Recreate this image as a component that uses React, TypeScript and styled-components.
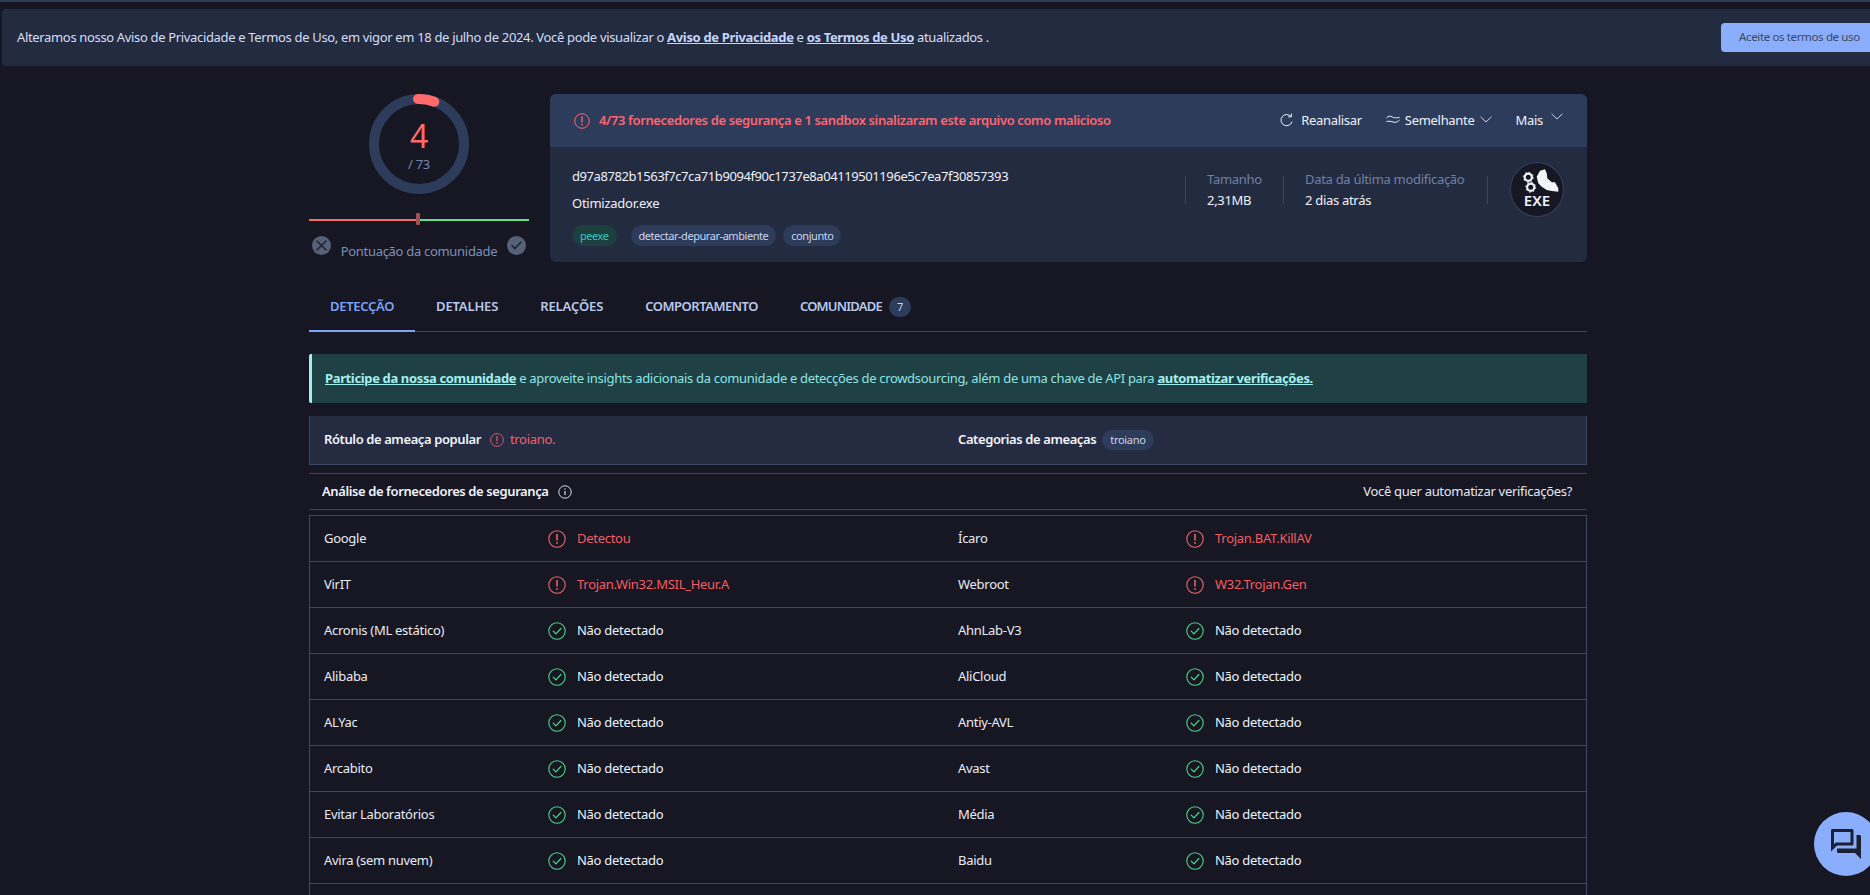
import React from "react";
import styled, { createGlobalStyle } from "styled-components";

const Global = createGlobalStyle`
  html, body { margin: 0; padding: 0; background: #161723; height: 100%; overflow: hidden; }
  body { font-family: "Noto Sans", "Liberation Sans", sans-serif; color: #eef1f8; letter-spacing: -0.3px; }
  * { box-sizing: border-box; }
`;

const Page = styled.div`
  position: relative;
  height: 895px;
  overflow: hidden;
  background: #161723;
`;
const TopStrip = styled.div`
  height: 2px;
  background: #2d3b59;
`;
const NoticeBar = styled.div`
  margin: 7px 0 0 2px;
  height: 57px;
  padding: 0 0 0 15px;
  display: flex;
  align-items: center;
  justify-content: space-between;
  background: #232b41;
  border-radius: 4px 0 0 4px;
  font-size: 13px;
  letter-spacing: -0.34px;
  color: #d5def5;
`;
const NoticeText = styled.span`
  padding-bottom: 2px;
`;
const NoticeLink = styled.a`
  font-weight: 700;
  color: #c5d6fb;
  text-decoration: underline;
`;
const AcceptButton = styled.button`
  width: 149px;
  height: 29px;
  border: 0;
  border-radius: 4px 0 0 4px;
  background: #8aaefc;
  color: #3a4763;
  font: 11.5px "Noto Sans", sans-serif;
  letter-spacing: -0.36px;
  text-align: left;
  padding: 0 0 2px 18px;
`;
const Main = styled.main`
  width: 1278px;
  margin-left: 309px;
`;
const Summary = styled.section`
  margin-top: 28px;
  display: grid;
  grid-template-columns: 220px 1037px;
  gap: 21px;
  height: 168px;
`;
const ScoreColumn = styled.div`
  display: flex;
  flex-direction: column;
  align-items: center;
`;
const Donut = styled.div`
  position: relative;
  width: 100px;
  height: 100px;
`;
const DonutValue = styled.div`
  position: absolute;
  top: 17px;
  left: 0;
  right: 0;
  text-align: center;
  font-size: 32px;
  line-height: 50px;
  color: #ff6b6b;
  font-weight: 400;
`;
const DonutTotal = styled.div`
  position: absolute;
  top: 60px;
  left: 0;
  right: 0;
  text-align: center;
  font-size: 13px;
  line-height: 20px;
  color: #7487ab;
`;
const Meter = styled.div`
  position: relative;
  width: 220px;
  height: 2px;
  margin-top: 25px;
  background: linear-gradient(to right, #f56a6a 0 109px, #5fe08d 109px);
`;
const MeterHandle = styled.span`
  position: absolute;
  left: 107px;
  top: -6px;
  width: 4px;
  height: 12px;
  border-radius: 1px;
  background: #a64f52;
`;
const VoteRow = styled.div`
  width: 220px;
  margin-top: 15px;
  padding: 0 3px;
  display: flex;
  justify-content: space-between;
  align-items: flex-start;
`;
const VoteButton = styled.span`
  width: 19px;
  height: 19px;
  border-radius: 50%;
  background: #566178;
  display: flex;
  align-items: center;
  justify-content: center;
`;
const VoteLabel = styled.span`
  margin-top: 5px;
  font-size: 13px;
  line-height: 20px;
  color: #7d8fb6;
`;
const Card = styled.div`
  border-radius: 6px;
  background: #232b41;
  overflow: hidden;
`;
const CardHeader = styled.div`
  height: 53px;
  background: #2e3c5b;
  display: flex;
  align-items: center;
  padding: 0 24px;
`;
const AlertText = styled.span`
  margin-left: 9px;
  padding-bottom: 2px;
  font-size: 13px;
  font-weight: 600;
  letter-spacing: -0.37px;
  color: #ff6470;
`;
const Actions = styled.div`
  margin-left: auto;
  padding-bottom: 2px;
  display: flex;
  align-items: center;
  font-size: 13px;
  color: #eef2fb;
`;
const Action = styled.span<{ $ml: number; $gap: number }>`
  display: inline-flex;
  align-items: center;
  margin-left: ${(p) => p.$ml}px;
  gap: ${(p) => p.$gap}px;
`;
const CardBody = styled.div`
  display: flex;
  padding: 15px 23px 0 22px;
`;
const FileInfo = styled.div`
  flex: 1;
`;
const Hash = styled.div`
  margin-top: 4px;
  font-size: 13px;
  line-height: 20px;
  letter-spacing: -0.42px;
`;
const FileName = styled.div`
  margin-top: 7px;
  font-size: 13px;
  line-height: 20px;
  letter-spacing: -0.25px;
`;
const Tags = styled.div`
  margin-top: 12px;
  display: flex;
  gap: 7px;
`;
const Tag = styled.span<{ $teal?: boolean }>`
  height: 21px;
  padding: 0 8px;
  border-radius: 11px;
  font-size: 11px;
  letter-spacing: -0.45px;
  line-height: 21px;
  margin-right: ${(p) => (p.$teal ? "7px" : "0")};
  background: ${(p) => (p.$teal ? "#1c3f40" : "#2e3c5b")};
  color: ${(p) => (p.$teal ? "#3cc4ba" : "#c8d4ef")};
`;
const Stat = styled.div<{ $w: number }>`
  width: ${(p) => p.$w}px;
  height: 28px;
  margin-top: 14px;
  border-left: 1px solid #3a4762;
  padding-left: 21px;
`;
const StatLabel = styled.div`
  margin-top: -7px;
  font-size: 13px;
  line-height: 20px;
  color: #6f80a3;
`;
const StatValue = styled.div`
  margin-top: 1px;
  font-size: 13px;
  line-height: 20px;
  color: #eef2fb;
`;
const StatEnd = styled.div`
  width: 23px;
  height: 28px;
  margin-top: 14px;
  border-left: 1px solid #3a4762;
`;
const FileBadge = styled.div`
  position: relative;
  width: 54px;
  height: 55px;
  border-radius: 50%;
  background: #161723;
  border: 1px solid #36415d;
`;
const BadgeText = styled.span`
  position: absolute;
  left: 0;
  right: 0;
  top: 28px;
  text-align: center;
  font-size: 15px;
  line-height: 18px;
  font-weight: 600;
  letter-spacing: 0;
  color: #eef1f8;
`;
const Tabs = styled.nav`
  margin-top: 19px;
  height: 51px;
  display: flex;
  border-bottom: 1px solid #3a4662;
`;
const TabItem = styled.div<{ $active?: boolean; $spacing: number }>`
  padding: 0 21px;
  height: 51px;
  display: flex;
  align-items: center;
  font-size: 13px;
  font-weight: 600;
  letter-spacing: ${(p) => p.$spacing}px;
  color: ${(p) => (p.$active ? "#7ea3f5" : "#b9c9ec")};
  border-bottom: 2px solid ${(p) => (p.$active ? "#7ea3f5" : "transparent")};
`;
const TabCount = styled.span`
  width: 22px;
  height: 20px;
  margin: 2px 0 0 7px;
  border-radius: 10px;
  background: #2e3c5b;
  font-size: 11px;
  font-weight: 400;
  line-height: 20px;
  text-align: center;
  color: #c8d4ef;
`;
const CommunityBanner = styled.div`
  margin-top: 22px;
  height: 49px;
  padding: 0 0 2px 13px;
  display: flex;
  align-items: center;
  background: #1f4045;
  border-left: 3px solid #a2f0ee;
  border-radius: 2px 0 0 2px;
  font-size: 13px;
  letter-spacing: -0.32px;
  color: #8fe3e0;
`;
const CommunityLink = styled.a`
  font-weight: 700;
  letter-spacing: -0.36px;
  color: #a2f0ee;
  text-decoration: underline;
`;
const ThreatRow = styled.div`
  margin-top: 13px;
  height: 49px;
  display: flex;
  align-items: center;
  background: #252c42;
  border: 1px solid #3a4662;
  border-top: 0;
`;
const ThreatCell = styled.div<{ $w?: number }>`
  display: flex;
  align-items: center;
  gap: 6px;
  width: ${(p) => (p.$w ? `${p.$w}px` : "auto")};
  padding-left: ${(p) => (p.$w ? "14px" : "0")};
`;
const Strong = styled.span`
  padding-bottom: 2px;
  font-size: 13px;
  font-weight: 600;
  letter-spacing: -0.4px;
  color: #f2f4fa;
`;
const ThreatLabel = styled(Strong)`
  margin-right: 3px;
`;
const ThreatValue = styled.span`
  padding-bottom: 2px;
  font-size: 13px;
  color: #f0616a;
`;
const ThreatTag = styled.span`
  height: 20px;
  padding: 0 8px;
  border-radius: 10px;
  background: #2e3c5b;
  font-size: 11px;
  line-height: 20px;
  color: #c8d4ef;
`;
const VendorsHeader = styled.div`
  margin-top: 8px;
  height: 37px;
  display: flex;
  align-items: center;
  justify-content: space-between;
  padding: 0 15px 0 13px;
  border-top: 1px solid #3a4662;
  border-bottom: 1px solid #3a4662;
  font-size: 13px;
`;
const VendorsTitle = styled.span`
  display: flex;
  align-items: center;
  gap: 9px;
`;
const AutomateLink = styled.span`
  padding-bottom: 2px;
  color: #e3e7f2;
`;
const Table = styled.div`
  margin-top: 5px;
  border: 1px solid #3a4662;
  border-bottom: 0;
`;
const Row = styled.div`
  height: 46px;
  display: grid;
  grid-template-columns: 634px 634px;
  padding-left: 14px;
  border-bottom: 1px solid #3a4662;
`;
const Cell = styled.div<{ $name: number }>`
  display: grid;
  grid-template-columns: ${(p) => p.$name}px 29px 1fr;
  align-items: center;
  font-size: 13px;
  letter-spacing: -0.28px;
`;
const VendorName = styled.span`
  padding-bottom: 2px;
  color: #e8ebf4;
`;
const Verdict = styled.span<{ $bad: boolean }>`
  padding-bottom: 2px;
  color: ${(p) => (p.$bad ? "#f55c62" : "#eef2fb")};
`;
const ChatBubble = styled.div`
  position: absolute;
  left: 1814px;
  top: 812px;
  width: 64px;
  height: 64px;
  border-radius: 50%;
  background: #8aaefc;
  display: flex;
  align-items: center;
  justify-content: center;
`;

const AlertIcon = ({ size, color }: { size: number; color: string }) => (
  <svg width={size} height={size} viewBox="0 0 18 18" fill="none" stroke={color}>
    <circle cx="9" cy="9" r="8.2" strokeWidth="1.1" />
    <path d="M9 4.5v5.5" strokeWidth="1.5" strokeLinecap="round" />
    <circle cx="9" cy="12.9" r="0.95" fill={color} stroke="none" />
  </svg>
);
const OkIcon = () => (
  <svg width="18" height="18" viewBox="0 0 18 18" fill="none" stroke="#4fd687">
    <circle cx="9" cy="9" r="8.2" strokeWidth="1.1" />
    <path d="M5.2 9.2l2.7 2.7 5-5.4" strokeWidth="1.2" strokeLinecap="round" strokeLinejoin="round" />
  </svg>
);
const InfoIcon = () => (
  <svg width="14" height="14" viewBox="0 0 14 14" fill="none" stroke="#f0f2f8">
    <circle cx="7" cy="7" r="6.2" strokeWidth="0.9" />
    <path d="M7 6v4" strokeWidth="1.1" />
    <circle cx="7" cy="4" r="0.7" fill="#f0f2f8" stroke="none" />
  </svg>
);
const Chevron = ({ lift = 0 }: { lift?: number }) => (
  <svg width="12" height="7" viewBox="0 0 12 7" fill="none" stroke="#dfe5f3" strokeWidth="0.9" style={lift ? { marginTop: -lift } : undefined}>
    <path d="M0.6 0.8L6 6l5.4-5.2" />
  </svg>
);
const RefreshIcon = () => (
  <svg width="13" height="14" viewBox="0 0 13 14" fill="none" stroke="#eef2fb" strokeWidth="1">
    <path d="M10.8 3.4A5.6 5.6 0 1 0 12 8.6" />
    <path d="M11.4 0.6v3.2H8.2" />
  </svg>
);
const SimilarIcon = () => (
  <svg width="14" height="9" viewBox="0 0 14 9" fill="none" stroke="#eef2fb" strokeWidth="1">
    <path d="M0.5 3C2.5 1 4 .8 6 1.8s2.6 1.4 7.5 .6" />
    <path d="M0.5 6.6C3 6 4.5 6.2 7 7s4 .4 6.5-2" />
  </svg>
);
const ChatIcon = () => (
  <svg width="36" height="36" viewBox="0 0 24 24" fill="#1d2033">
    <path d="M15 4v7H5.17L4 12.17V4h11m1-2H3c-.55 0-1 .45-1 1v14l4-4h10c.55 0 1-.45 1-1V3c0-.55-.45-1-1-1zm5 4h-2v9H6v2c0 .55.45 1 1 1h11l4 4V7c0-.55-.45-1-1-1z" />
  </svg>
);
const CrossIcon = () => (
  <svg width="11" height="11" viewBox="0 0 11 11" stroke="#1f2233" strokeWidth="1.5" strokeLinecap="round">
    <path d="M1 1l9 9M10 1l-9 9" />
  </svg>
);
const CheckIcon = () => (
  <svg width="11" height="9" viewBox="0 0 11 9" fill="none" stroke="#1f2233" strokeWidth="1.5" strokeLinecap="round" strokeLinejoin="round">
    <path d="M1 4.6l3 3L10 1" />
  </svg>
);
const GearsIcon = () => (
  <svg width="54" height="34" viewBox="0 0 54 34" style={{ position: "absolute", left: -1, top: -1 }}>
    <g fill="none" stroke="#f2f4f9">
      <circle cx="18.3" cy="15.3" r="3.6" strokeWidth="2.2" />
      <circle cx="20.7" cy="25.3" r="3.6" strokeWidth="2.2" />
      <circle cx="18.3" cy="15.3" r="5" strokeWidth="1" strokeDasharray="1.5 2.4" />
      <circle cx="20.7" cy="25.3" r="5" strokeWidth="1" strokeDasharray="1.5 2.4" />
    </g>
    <path
      fill="#f2f4f9"
      d="M26.7 14.7L30 8.7 35 7.3l1.7 4 .6 5 4.4 4h3.3l3.3 6v3.4l-6.6-.7-5-1-5-3.3-3.4-3.4z"
    />
  </svg>
);

const vendors: [string, string, boolean, string, string, boolean][] = [
  ["Google", "Detectou", true, "Ícaro", "Trojan.BAT.KillAV", true],
  ["VirIT", "Trojan.Win32.MSIL_Heur.A", true, "Webroot", "W32.Trojan.Gen", true],
  ["Acronis (ML estático)", "Não detectado", false, "AhnLab-V3", "Não detectado", false],
  ["Alibaba", "Não detectado", false, "AliCloud", "Não detectado", false],
  ["ALYac", "Não detectado", false, "Antiy-AVL", "Não detectado", false],
  ["Arcabito", "Não detectado", false, "Avast", "Não detectado", false],
  ["Evitar Laboratórios", "Não detectado", false, "Média", "Não detectado", false],
  ["Avira (sem nuvem)", "Não detectado", false, "Baidu", "Não detectado", false],
];

const Vendor = ({ name, verdict, bad, nameWidth }: { name: string; verdict: string; bad: boolean; nameWidth: number }) => (
  <Cell $name={nameWidth}>
    <VendorName>{name}</VendorName>
    {bad ? <AlertIcon size={18} color="#f0686c" /> : <OkIcon />}
    <Verdict $bad={bad}>{verdict}</Verdict>
  </Cell>
);

export default function App() {
  return (
    <Page>
      <Global />
      <TopStrip />
      <NoticeBar>
        <NoticeText>
          Alteramos nosso Aviso de Privacidade e Termos de Uso, em vigor em 18 de julho de 2024. Você pode visualizar o{" "}
          <NoticeLink>Aviso de Privacidade</NoticeLink> e <NoticeLink>os Termos de Uso</NoticeLink> atualizados .
        </NoticeText>
        <AcceptButton>Aceite os termos de uso</AcceptButton>
      </NoticeBar>
      <Main>
        <Summary>
          <ScoreColumn>
            <Donut>
              <svg width="100" height="100" viewBox="0 0 100 100" fill="none">
                <circle cx="50" cy="50" r="45" stroke="#2e3c5b" strokeWidth="10" />
                <path d="M49 5A45 45 0 0 1 65.3 7.7" stroke="#ff6b6b" strokeWidth="10" strokeLinecap="round" />
              </svg>
              <DonutValue>4</DonutValue>
              <DonutTotal>/ 73</DonutTotal>
            </Donut>
            <Meter>
              <MeterHandle />
            </Meter>
            <VoteRow>
              <VoteButton><CrossIcon /></VoteButton>
              <VoteLabel>Pontuação da comunidade</VoteLabel>
              <VoteButton><CheckIcon /></VoteButton>
            </VoteRow>
          </ScoreColumn>
          <Card>
            <CardHeader>
              <AlertIcon size={16} color="#ff6470" />
              <AlertText>4/73 fornecedores de segurança e 1 sandbox sinalizaram este arquivo como malicioso</AlertText>
              <Actions>
                <Action $ml={0} $gap={8}><RefreshIcon />Reanalisar</Action>
                <Action $ml={24} $gap={5}><SimilarIcon />Semelhante<Chevron /></Action>
                <Action $ml={24} $gap={8}>Mais<Chevron lift={6} /></Action>
              </Actions>
            </CardHeader>
            <CardBody>
              <FileInfo>
                <Hash>d97a8782b1563f7c7ca71b9094f90c1737e8a04119501196e5c7ea7f30857393</Hash>
                <FileName>Otimizador.exe</FileName>
                <Tags>
                  <Tag $teal>peexe</Tag>
                  <Tag>detectar-depurar-ambiente</Tag>
                  <Tag>conjunto</Tag>
                </Tags>
              </FileInfo>
              <Stat $w={98}>
                <StatLabel>Tamanho</StatLabel>
                <StatValue>2,31MB</StatValue>
              </Stat>
              <Stat $w={204}>
                <StatLabel>Data da última modificação</StatLabel>
                <StatValue>2 dias atrás</StatValue>
              </Stat>
              <StatEnd />
              <FileBadge>
                <GearsIcon />
                <BadgeText>EXE</BadgeText>
              </FileBadge>
            </CardBody>
          </Card>
        </Summary>
        <Tabs>
          <TabItem $active $spacing={-0.3}>DETECÇÃO</TabItem>
          <TabItem $spacing={-0.15}>DETALHES</TabItem>
          <TabItem $spacing={-0.1}>RELAÇÕES</TabItem>
          <TabItem $spacing={-0.5}>COMPORTAMENTO</TabItem>
          <TabItem $spacing={-0.8}>COMUNIDADE<TabCount>7</TabCount></TabItem>
        </Tabs>
        <CommunityBanner>
          <span>
            <CommunityLink>Participe da nossa comunidade</CommunityLink> e aproveite insights adicionais da comunidade e detecções de crowdsourcing, além de uma chave de API para{" "}
            <CommunityLink>automatizar verificações.</CommunityLink>
          </span>
        </CommunityBanner>
        <ThreatRow>
          <ThreatCell $w={648}>
            <ThreatLabel>Rótulo de ameaça popular</ThreatLabel>
            <AlertIcon size={14} color="#f0616a" />
            <ThreatValue>troiano.</ThreatValue>
          </ThreatCell>
          <ThreatCell>
            <Strong>Categorias de ameaças</Strong>
            <ThreatTag>troiano</ThreatTag>
          </ThreatCell>
        </ThreatRow>
        <VendorsHeader>
          <VendorsTitle>
            <Strong>Análise de fornecedores de segurança</Strong>
            <InfoIcon />
          </VendorsTitle>
          <AutomateLink>Você quer automatizar verificações?</AutomateLink>
        </VendorsHeader>
        <Table>
          {vendors.map((v) => (
            <Row key={v[0]}>
              <Vendor name={v[0]} verdict={v[1]} bad={v[2]} nameWidth={224} />
              <Vendor name={v[3]} verdict={v[4]} bad={v[5]} nameWidth={228} />
            </Row>
          ))}
          <Row />
        </Table>
      </Main>
      <ChatBubble><ChatIcon /></ChatBubble>
    </Page>
  );
}
